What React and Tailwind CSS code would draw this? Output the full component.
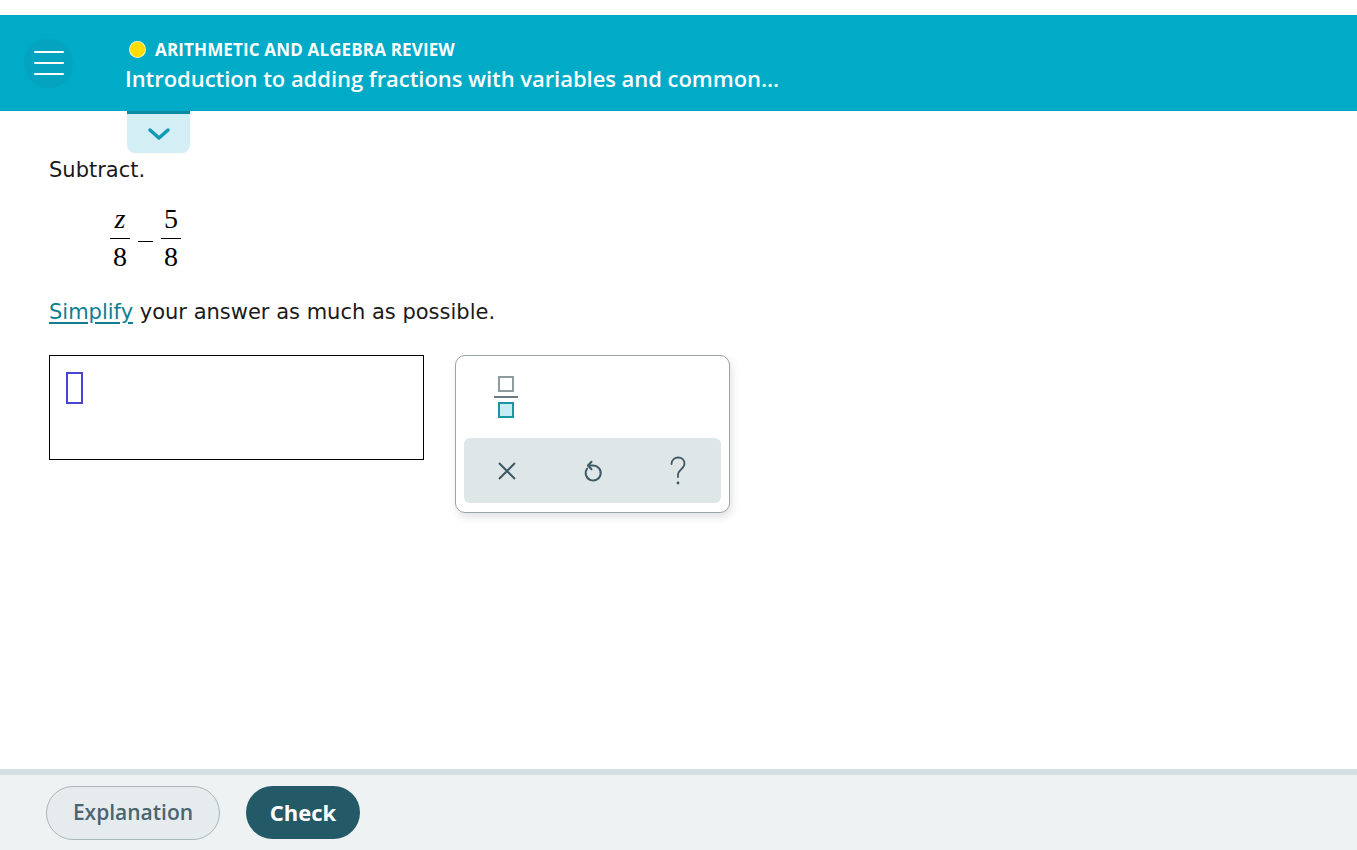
import React from 'react'

function Header() {
  return (
    <div className="pt-[15px] bg-white">
      <header className="h-[96px] bg-[#00abc8] flex items-center">
        <div className="ml-[24px] w-[49px] h-[49px] rounded-full bg-[#04a3bf] flex flex-col items-center justify-center gap-[9px]">
          <span className="block w-[30px] h-[2px] bg-white rounded" />
          <span className="block w-[30px] h-[2px] bg-white rounded" />
          <span className="block w-[30px] h-[2px] bg-white rounded" />
        </div>
        <div className="ml-[52px] pt-[5px] flex flex-col font-['Open_Sans',sans-serif]">
          <div className="flex items-center gap-[9px] ml-[4px]">
            <span className="w-[17px] h-[17px] rounded-full bg-[#ffdd00] border border-white/70" />
            <span className="text-white text-[17px] font-bold tracking-[0.15px] leading-[20px]">ARITHMETIC AND ALGEBRA REVIEW</span>
          </div>
          <div className="text-white text-[22px] font-semibold leading-[28px] tracking-[-0.05px] mt-[4px]">
            Introduction to adding fractions with variables and common...
          </div>
        </div>
      </header>
      <div className="ml-[127px] w-[63px] h-[42px] bg-[#d3eef4] rounded-b-[8px] border-t-[3px] border-[#0b8ba3] flex items-center justify-center">
        <svg width="24" height="14" viewBox="0 0 24 14" fill="none">
          <path d="M3 3 L12 11 L21 3" stroke="#119ab5" strokeWidth="3.5" strokeLinecap="round" strokeLinejoin="round" />
        </svg>
      </div>
    </div>
  )
}

function Fraction({ children, bottom }) {
  return (
    <span className="inline-flex flex-col items-center">
      <span className="px-[2px] text-[28px] leading-[30px]">{children}</span>
      <span className="block w-[20px] h-[1px] bg-black mt-[4px]" />
      <span className="px-[2px] text-[28px] leading-[30px] mt-[3px]">{bottom}</span>
    </span>
  )
}

function Keypad() {
  return (
    <div className="w-[275px] h-[158px] border border-[#9aa5a8] rounded-[10px] bg-white shadow-[2px_4px_8px_rgba(0,0,0,0.12)] px-[8px] pt-[20px]">
      <div className="ml-[29px] w-[26px] flex flex-col items-center">
        <span className="w-[16px] h-[16px] border-[2px] border-[#8d9a9e]" />
        <span className="w-[24px] h-[2px] bg-[#6a7b80] my-[4px]" />
        <span className="w-[16px] h-[16px] border-[2px] border-[#1a95a3] bg-[#c8ecf3]" />
      </div>
      <div className="mt-[20px] h-[65px] bg-[#dfe6e8] rounded-[6px] flex items-center">
        <div className="w-[86px] flex justify-center">
          <svg width="22" height="22" viewBox="0 0 22 22">
            <path d="M3 3 L19 19 M19 3 L3 19" stroke="#3e5964" strokeWidth="2" />
          </svg>
        </div>
        <div className="w-[86px] flex justify-center">
          <svg width="24" height="26" viewBox="0 0 24 26" fill="none">
            <path d="M6.2 10.5 A7.5 7.5 0 1 0 12 7.5 L7.5 7.5" stroke="#3e5964" strokeWidth="2" strokeLinecap="round" strokeLinejoin="round" />
            <path d="M10.5 3.8 L7 7.5 L10.5 11.2" stroke="#3e5964" strokeWidth="2" strokeLinecap="round" strokeLinejoin="round" />
          </svg>
        </div>
        <div className="w-[86px] flex justify-center">
          <svg width="20" height="30" viewBox="0 0 20 30" fill="none">
            <path d="M3.5 8 C3.5 3.5 7 1.5 10 1.5 C13.8 1.5 16.5 4 16.5 7.8 C16.5 12.5 10 14 10 19 L10 21" stroke="#3e5964" strokeWidth="1.8" strokeLinecap="round" />
            <circle cx="10" cy="27" r="1.4" fill="#3e5964" />
          </svg>
        </div>
      </div>
    </div>
  )
}

function App() {
  return (
    <div className="w-[1357px] h-[850px] bg-white flex flex-col overflow-hidden">
      <Header />

      <main className="flex-1 pl-[49px] font-['DejaVu_Sans',Verdana,sans-serif]">
        <p className="text-[21px] leading-[24px] text-[#1a1a1a] mt-[5px]">Subtract.</p>

        <div className="ml-[61px] mt-[22px] flex items-center text-black font-['Liberation_Serif','Times_New_Roman',serif]">
          <Fraction bottom="8"><i>z</i></Fraction>
          <span className="mx-[8px] w-[15px] h-[1px] bg-black mt-[6px]" />
          <Fraction bottom="8">5</Fraction>
        </div>

        <p className="mt-[28px] text-[21px] leading-[24px] text-[#1a1a1a]">
          <span className="text-[#0e7f91] underline underline-offset-[3px]">Simplify</span> your answer as much as possible.
        </p>

        <div className="mt-[31px] flex items-start">
          <div className="w-[375px] h-[105px] border border-black pl-[16px] pt-[16px]">
            <span className="block w-[17px] h-[32px] border-[2px] border-[#4b44cf]" />
          </div>
          <div className="ml-[31px]">
            <Keypad />
          </div>
        </div>
      </main>

      <footer className="h-[81px] border-t-[6px] border-[#d4dfe2] bg-[#eef2f3] flex items-center pl-[46px] gap-[26px] font-['Open_Sans',sans-serif]">
        <button className="h-[54px] w-[174px] rounded-full border border-[#a9b6ba] bg-[#e6ecee] text-[#4a6570] text-[21px] font-semibold">Explanation</button>
        <button className="h-[53px] w-[114px] rounded-full bg-[#245a68] text-white text-[22px] font-bold">Check</button>
      </footer>
    </div>
  )
}

export default App
